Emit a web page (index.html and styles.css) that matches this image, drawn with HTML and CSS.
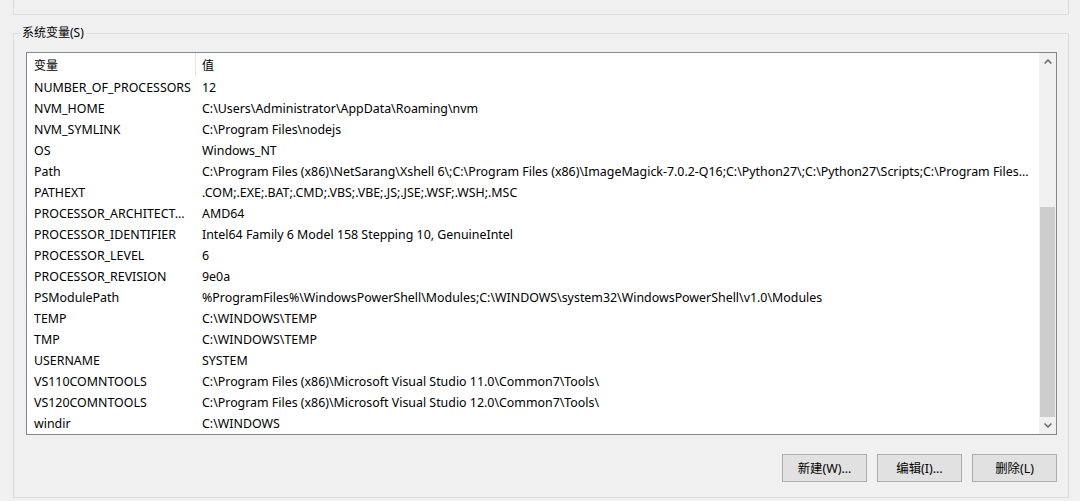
FILE: index.html
```html
<!DOCTYPE html>
<html lang="zh-CN">
<head>
<meta charset="utf-8">
<title>系统变量</title>
<link rel="stylesheet" href="styles.css">
</head>
<body>
<div class="top-group"></div>
<fieldset class="group">
  <legend class="group-title">系统变量(S)</legend>
  <div class="group-inner">
    <div class="listbox">
      <div class="list-body">
        <div class="list-head">
          <div class="hcell hname">变量</div>
          <div class="hcell hval">值</div>
        </div>
        <div class="row"><div class="cname">NUMBER_OF_PROCESSORS</div><div class="cval">12</div></div>
        <div class="row"><div class="cname">NVM_HOME</div><div class="cval">C:\Users\Administrator\AppData\Roaming\nvm</div></div>
        <div class="row"><div class="cname">NVM_SYMLINK</div><div class="cval">C:\Program Files\nodejs</div></div>
        <div class="row"><div class="cname">OS</div><div class="cval">Windows_NT</div></div>
        <div class="row"><div class="cname">Path</div><div class="cval">C:\Program Files (x86)\NetSarang\Xshell 6\;C:\Program Files (x86)\ImageMagick-7.0.2-Q16;C:\Python27\;C:\Python27\Scripts;C:\Program Files...</div></div>
        <div class="row"><div class="cname">PATHEXT</div><div class="cval">.COM;.EXE;.BAT;.CMD;.VBS;.VBE;.JS;.JSE;.WSF;.WSH;.MSC</div></div>
        <div class="row"><div class="cname">PROCESSOR_ARCHITECT...</div><div class="cval">AMD64</div></div>
        <div class="row"><div class="cname">PROCESSOR_IDENTIFIER</div><div class="cval">Intel64 Family 6 Model 158 Stepping 10, GenuineIntel</div></div>
        <div class="row"><div class="cname">PROCESSOR_LEVEL</div><div class="cval">6</div></div>
        <div class="row"><div class="cname">PROCESSOR_REVISION</div><div class="cval">9e0a</div></div>
        <div class="row"><div class="cname">PSModulePath</div><div class="cval">%ProgramFiles%\WindowsPowerShell\Modules;C:\WINDOWS\system32\WindowsPowerShell\v1.0\Modules</div></div>
        <div class="row"><div class="cname">TEMP</div><div class="cval">C:\WINDOWS\TEMP</div></div>
        <div class="row"><div class="cname">TMP</div><div class="cval">C:\WINDOWS\TEMP</div></div>
        <div class="row"><div class="cname">USERNAME</div><div class="cval">SYSTEM</div></div>
        <div class="row"><div class="cname">VS110COMNTOOLS</div><div class="cval">C:\Program Files (x86)\Microsoft Visual Studio 11.0\Common7\Tools\</div></div>
        <div class="row"><div class="cname">VS120COMNTOOLS</div><div class="cval">C:\Program Files (x86)\Microsoft Visual Studio 12.0\Common7\Tools\</div></div>
        <div class="row"><div class="cname">windir</div><div class="cval">C:\WINDOWS</div></div>
      </div>
      <div class="scrollbar">
        <div class="sb-btn">
          <svg width="8" height="5" viewBox="0 0 8 5"><polyline points="0.6,4.4 4,1 7.4,4.4" fill="none" stroke="#606060" stroke-width="1.4"/></svg>
        </div>
        <div class="sb-track">
          <div class="sb-thumb"></div>
        </div>
        <div class="sb-btn">
          <svg width="8" height="5" viewBox="0 0 8 5"><polyline points="0.6,0.6 4,4 7.4,0.6" fill="none" stroke="#606060" stroke-width="1.4"/></svg>
        </div>
      </div>
    </div>
    <div class="buttons">
      <button class="btn">新建(W)...</button>
      <button class="btn">编辑(I)...</button>
      <button class="btn">删除(L)</button>
    </div>
  </div>
</fieldset>
</body>
</html>
```
FILE: styles.css
```css
html, body {
  margin: 0;
  padding: 0;
  width: 1080px;
  height: 501px;
  overflow: hidden;
  background: #f0f0f0;
}
body {
  font-family: "Noto Sans", "Noto Sans CJK SC", sans-serif;
  font-size: 12.4px;
  color: #000;
}
.top-group {
  height: 14px;
  margin: 0 11px 0 13px;
  border: 1px solid #dcdcdc;
  border-top: none;
}
.group {
  margin: 10px 11px 0 13px;
  padding: 0;
  border: 1px solid #dcdcdc;
  min-width: 0;
}
.group-title {
  margin-left: 6px;
  padding: 0 2px;
  line-height: 16px;
  font-size: 12px;
}
.group-inner {
  padding: 11px 11px 15px 12px;
}
.listbox {
  display: flex;
  height: 381px;
  border: 1px solid #828790;
  background: #fff;
}
.list-body {
  flex: 1;
  min-width: 0;
  overflow: hidden;
}
.list-head {
  display: grid;
  grid-template-columns: 169px 1fr;
  height: 24px;
}
.hcell {
  display: flex;
  align-items: center;
  font-size: 12px;
}
.hname {
  padding-left: 7px;
  border-right: 1px solid #e5e5e5;
}
.hval {
  padding-left: 6px;
}
.row {
  display: grid;
  grid-template-columns: 169px 1fr;
  height: 21px;
  align-items: center;
}
.cname {
  padding-left: 7px;
  white-space: nowrap;
  overflow: hidden;
}
.cval {
  padding-left: 6px;
  white-space: nowrap;
  overflow: hidden;
}
.scrollbar {
  width: 17px;
  display: flex;
  flex-direction: column;
  background: #f0f0f0;
}
.sb-btn {
  height: 17px;
  display: flex;
  align-items: center;
  justify-content: center;
}
.sb-track {
  flex: 1;
  display: flex;
  flex-direction: column;
  justify-content: flex-end;
}
.sb-thumb {
  height: 210px;
  margin: 0 1px;
  background: #cdcdcd;
}
.buttons {
  display: flex;
  justify-content: flex-end;
  gap: 10px;
  margin-top: 19px;
}
.btn {
  width: 85px;
  height: 28px;
  border: 1px solid #adadad;
  background: #e1e1e1;
  font-family: "Noto Sans", "Noto Sans CJK SC", sans-serif;
  font-size: 12.4px;
  color: #000;
  padding: 0;
}
```
